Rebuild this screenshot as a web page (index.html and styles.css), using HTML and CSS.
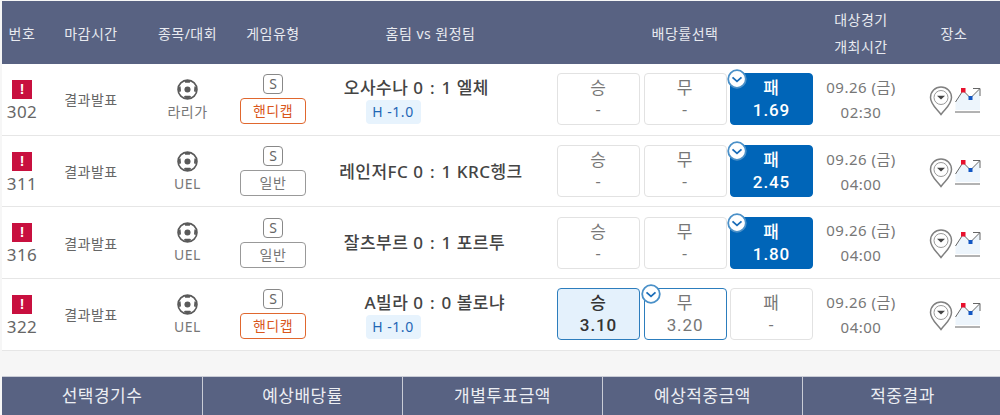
FILE: index.html
```html
<!DOCTYPE html>
<html lang="ko">
<head>
    <meta charset="UTF-8">
    <title>투표</title>
    <link rel="stylesheet" href="styles.css">
</head>
<body>
    <svg class="defs" width="0" height="0">
        <symbol id="ball" viewBox="0 0 20 20">
            <circle cx="10" cy="10" r="9" fill="#fff" stroke="#5a5a5a" stroke-width="1.6"/>
            <circle cx="10" cy="10" r="2.9" fill="#5a5a5a"/>
            <path d="M7 1.5 H13 L12.2 3.6 H7.8Z M1.6 8 L3.4 6.8 L3.8 11.6 L2.2 12.6Z M18.4 8 L16.6 6.8 L16.2 11.6 L17.8 12.6Z M6 17.4 L7.6 16 H12.4 L14 17.4 L10 18.6Z" fill="#5a5a5a"/>
        </symbol>
        <symbol id="pin" viewBox="0 0 24 30">
            <path d="M12 28.5 C8 23 1.5 18.5 1.5 11.5 A10.5 10.5 0 0 1 22.5 11.5 C22.5 18.5 16 23 12 28.5Z" fill="#fff" stroke="#808080" stroke-width="1.5"/>
            <circle cx="12" cy="11.5" r="7" fill="#fff" stroke="#999" stroke-width="1"/>
            <path d="M8 9.8 H16 L12 13.6Z" fill="#444"/>
        </symbol>
        <symbol id="chart" viewBox="0 0 26 27">
            <path d="M0.5 15 L8 3.5 L15.5 11 L25 2 V23 H0.5Z" fill="#edf5fc"/>
            <path d="M0.5 15 L8 3.5 L15.5 11 L24.5 2" fill="none" stroke="#666" stroke-width="1"/>
            <path d="M18 1.5 H25 V9" fill="none" stroke="#666" stroke-width="1"/>
            <rect x="6" y="1" width="4.5" height="4.5" fill="#e8112d"/>
            <rect x="13.5" y="9" width="4" height="4" fill="#1257c4"/>
            <path d="M0 25 H25" stroke="#666" stroke-width="1"/>
        </symbol>
        <symbol id="tick" viewBox="0 0 20 20">
            <circle cx="10" cy="10" r="8.8" fill="#fff" stroke="#4a90c8" stroke-width="1.8"/>
            <path d="M5.5 8.4 L10 12.4 L14.5 8.4" fill="none" stroke="#1a6cb8" stroke-width="1.8"/>
        </symbol>
    </svg>

    <div class="row head">
        <div>번호</div>
        <div>마감시간</div>
        <div>종목/대회</div>
        <div>게임유형</div>
        <div>홈팀 vs 원정팀</div>
        <div>배당률선택</div>
        <div class="two-line"><span>대상경기</span><span>개최시간</span></div>
        <div>장소</div>
    </div>

    <div class="row game">
        <div class="no"><span class="alert">!</span><span>302</span></div>
        <div class="deadline">결과발표</div>
        <div class="league"><svg class="ball"><use href="#ball"/></svg><span>라리가</span></div>
        <div class="type"><span class="s-mark">S</span><span class="tag hand">핸디캡</span></div>
        <div class="match">
            <div class="score"><span class="home">오사수나 0</span><span class="colon">:</span><span class="away">1 엘체</span></div>
            <span class="handi">H -1.0</span>
        </div>
        <div class="odds">
            <div class="odd"><span>승</span><span>-</span></div>
            <div class="odd"><span>무</span><span>-</span></div>
            <div class="odd on"><svg class="tick"><use href="#tick"/></svg><span>패</span><span>1.69</span></div>
        </div>
        <div class="date"><span>09.26 (금)</span><span>02:30</span></div>
        <div class="place"><svg class="pin"><use href="#pin"/></svg><svg class="chart"><use href="#chart"/></svg></div>
    </div>

    <div class="row game">
        <div class="no"><span class="alert">!</span><span>311</span></div>
        <div class="deadline">결과발표</div>
        <div class="league"><svg class="ball"><use href="#ball"/></svg><span>UEL</span></div>
        <div class="type"><span class="s-mark">S</span><span class="tag">일반</span></div>
        <div class="match single">
            <div class="score"><span class="home">레인저FC 0</span><span class="colon">:</span><span class="away">1 KRC헹크</span></div>
        </div>
        <div class="odds">
            <div class="odd"><span>승</span><span>-</span></div>
            <div class="odd"><span>무</span><span>-</span></div>
            <div class="odd on"><svg class="tick"><use href="#tick"/></svg><span>패</span><span>2.45</span></div>
        </div>
        <div class="date"><span>09.26 (금)</span><span>04:00</span></div>
        <div class="place"><svg class="pin"><use href="#pin"/></svg><svg class="chart"><use href="#chart"/></svg></div>
    </div>

    <div class="row game">
        <div class="no"><span class="alert">!</span><span>316</span></div>
        <div class="deadline">결과발표</div>
        <div class="league"><svg class="ball"><use href="#ball"/></svg><span>UEL</span></div>
        <div class="type"><span class="s-mark">S</span><span class="tag">일반</span></div>
        <div class="match single">
            <div class="score"><span class="home">잘츠부르 0</span><span class="colon">:</span><span class="away">1 포르투</span></div>
        </div>
        <div class="odds">
            <div class="odd"><span>승</span><span>-</span></div>
            <div class="odd"><span>무</span><span>-</span></div>
            <div class="odd on"><svg class="tick"><use href="#tick"/></svg><span>패</span><span>1.80</span></div>
        </div>
        <div class="date"><span>09.26 (금)</span><span>04:00</span></div>
        <div class="place"><svg class="pin"><use href="#pin"/></svg><svg class="chart"><use href="#chart"/></svg></div>
    </div>

    <div class="row game">
        <div class="no"><span class="alert">!</span><span>322</span></div>
        <div class="deadline">결과발표</div>
        <div class="league"><svg class="ball"><use href="#ball"/></svg><span>UEL</span></div>
        <div class="type"><span class="s-mark">S</span><span class="tag hand">핸디캡</span></div>
        <div class="match">
            <div class="score"><span class="home">A빌라 0</span><span class="colon">:</span><span class="away">0 볼로냐</span></div>
            <span class="handi">H -1.0</span>
        </div>
        <div class="odds">
            <div class="odd picked"><span>승</span><span>3.10</span></div>
            <div class="odd chosen"><svg class="tick"><use href="#tick"/></svg><span>무</span><span>3.20</span></div>
            <div class="odd"><span>패</span><span>-</span></div>
        </div>
        <div class="date"><span>09.26 (금)</span><span>04:00</span></div>
        <div class="place"><svg class="pin"><use href="#pin"/></svg><svg class="chart"><use href="#chart"/></svg></div>
    </div>

    <div class="summary">
        <div>선택경기수</div>
        <div>예상배당률</div>
        <div>개별투표금액</div>
        <div>예상적중금액</div>
        <div>적중결과</div>
    </div>
</body>
</html>
```

FILE: styles.css
```css
html, body {
    height: 415px;
    overflow: hidden;
}
body {
    margin: 0;
    padding: 1px 0 0 2px;
    box-sizing: border-box;
    background-color: #f6f6f6;
    color: #666;
    font-family: "Noto Sans", "Noto Sans CJK KR", sans-serif;
    font-size: 14px;
    letter-spacing: 0.5px;
}
.defs {
    position: absolute;
}
.row {
    display: grid;
    grid-template-columns: 40px 98px 95px 76px 239px 270px 82px 1fr;
    text-align: center;
}
.row > div {
    display: flex;
    flex-direction: column;
    align-items: center;
    justify-content: center;
}
.head {
    height: 63px;
    background-color: #586282;
    color: #e8eaf0;
}
.head > div:last-child {
    padding-left: 6px;
}
.two-line {
    gap: 7px;
}
.game {
    height: 70.7px;
    background-color: #fff;
    border-bottom: 1px solid #e6e6e6;
}
.row > .no {
    padding-top: 3px;
    font-size: 17px;
    line-height: 21px;
    color: #666;
}
.alert {
    width: 20px;
    height: 19px;
    margin-bottom: 2px;
    background-color: #c8103f;
    color: #fff;
    font-family: "Liberation Sans", sans-serif;
    font-size: 14px;
    font-weight: bold;
    line-height: 19px;
    letter-spacing: 0;
}
.league {
    padding-top: 2px;
    line-height: 20px;
    color: #777;
}
.ball {
    width: 21px;
    height: 21px;
    margin-bottom: 2px;
}
.type {
    gap: 4px;
}
.s-mark {
    box-sizing: border-box;
    width: 20px;
    height: 20px;
    border: 1px solid #888;
    border-radius: 4px;
    font-size: 14px;
    line-height: 17px;
    letter-spacing: 0;
    color: #666;
}
.tag {
    box-sizing: border-box;
    width: 66px;
    height: 26px;
    border: 1px solid #999;
    border-radius: 4px;
    line-height: 23px;
    color: #777;
}
.tag.hand {
    border-color: #e0672e;
    color: #d9571c;
}
.row > .match {
    padding-top: 2px;
}
.row > .match.single {
    padding-top: 1px;
}
.score {
    display: grid;
    grid-template-columns: 1fr 18px 1fr;
    box-sizing: border-box;
    width: 100%;
    padding-left: 4px;
    font-size: 17px;
    font-weight: 500;
    line-height: 24px;
    color: #444;
    white-space: nowrap;
}
.home {
    text-align: right;
}
.away {
    text-align: left;
}
.handi {
    width: 55px;
    height: 24px;
    margin-right: 75px;
    border-radius: 4px;
    background-color: #e7f3fd;
    color: #1f66b5;
    line-height: 24px;
}
.row > .odds {
    flex-direction: row;
    gap: 3.5px;
}
.odd {
    position: relative;
    display: flex;
    flex-direction: column;
    align-items: center;
    justify-content: center;
    box-sizing: border-box;
    width: 83px;
    height: 52px;
    border: 1px solid #e2e2e2;
    border-radius: 4px;
    font-family: Roboto, "Noto Sans CJK KR", sans-serif;
    font-size: 17px;
    line-height: 22px;
    letter-spacing: 0.9px;
    color: #777;
}
.odd.on {
    background-color: #0065b8;
    border-color: #0065b8;
    color: #fff;
    font-weight: 500;
}
.odd.picked {
    background-color: #e4f1fc;
    border-color: #2c7dbd;
    color: #333;
    font-weight: 500;
}
.odd.chosen {
    border-color: #2c7dbd;
}
.tick {
    position: absolute;
    top: -5px;
    left: -4px;
    width: 20px;
    height: 20px;
}
.date {
    gap: 3px;
    font-size: 15px;
    line-height: 22px;
    color: #777;
}
.row > .place {
    flex-direction: row;
    gap: 2px;
    padding: 3px 0 0 8px;
}
.pin {
    width: 24px;
    height: 30px;
}
.chart {
    width: 26px;
    height: 27px;
}
.summary {
    display: grid;
    grid-template-columns: repeat(5, 200px);
    margin-top: 25px;
    height: 40px;
    border-top: 1px solid #c9ccd6;
    background-color: #586282;
    color: #eceef3;
    font-size: 17px;
    text-align: center;
    line-height: 37px;
}
.summary div + div {
    border-left: 1px solid #c9ccd6;
}
```
